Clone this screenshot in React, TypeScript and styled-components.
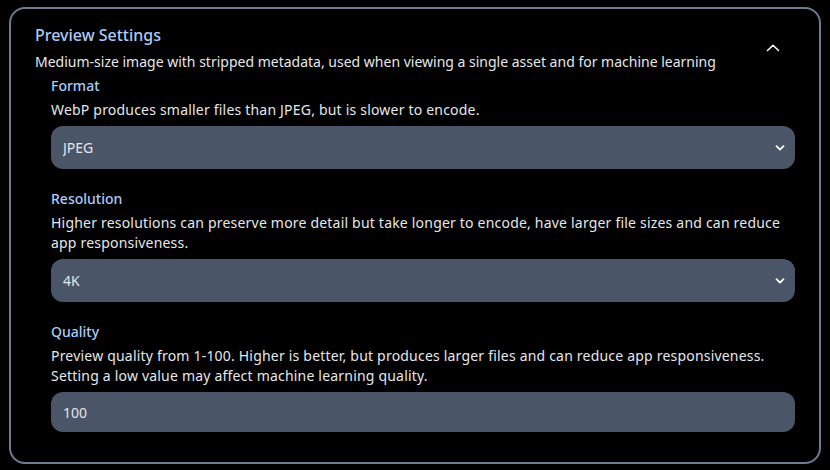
import React, { useState } from "react";
import styled, { createGlobalStyle } from "styled-components";

const Global = createGlobalStyle`
  body {
    margin: 0;
    background: #000;
    color: #e5e7eb;
    font-family: "Noto Sans", "Open Sans", sans-serif;
  }
`;

const Page = styled.div`
  padding: 7px 9px 4px;
`;

const Card = styled.section`
  border: 2px solid #6c7c97;
  border-radius: 16px;
  padding: 14px 24px 30px;
`;

const Header = styled.div`
  display: flex;
  align-items: center;
  justify-content: space-between;
`;

const Title = styled.h2`
  margin: 0;
  font-size: 16px;
  font-weight: 500;
  line-height: 24px;
  color: #adcbfa;
`;

const Subtitle = styled.p`
  margin: 5px 0 0;
  font-size: 14px;
  line-height: 20px;
`;

const Toggle = styled.button`
  width: 44px;
  height: 40px;
  display: flex;
  align-items: center;
  justify-content: center;
  background: none;
  border: none;
  color: #fff;
  cursor: pointer;
  padding: 0;
`;

const Settings = styled.div`
  display: flex;
  flex-direction: column;
  gap: 20px;
  padding-left: 16px;
  margin-top: 4px;
`;

const Setting = styled.div`
  display: flex;
  flex-direction: column;
`;

const Label = styled.label`
  font-size: 14px;
  font-weight: 500;
  line-height: 20px;
  color: #adcbfa;
`;

const Desc = styled.p`
  margin: 4px 0 0;
  font-size: 14px;
  line-height: 20px;
  letter-spacing: 0.2px;
`;

const Field = styled.div<{ $height: number }>`
  position: relative;
  margin-top: 6px;
  height: ${(p) => p.$height}px;
  border-radius: 12px;
  background: #4a5567;
  display: flex;
  align-items: center;
`;

const Select = styled.select`
  appearance: none;
  width: 100%;
  height: 100%;
  background: transparent;
  border: none;
  outline: none;
  color: #e5e7eb;
  font: inherit;
  font-size: 14px;
  padding: 0 40px 0 12px;
`;

const Input = styled.input`
  width: 100%;
  height: 100%;
  background: transparent;
  border: none;
  outline: none;
  color: #e5e7eb;
  font: inherit;
  font-size: 14px;
  padding: 0 12px;
  box-sizing: border-box;
`;

const Caret = styled.svg`
  position: absolute;
  right: 10px;
  top: 50%;
  transform: translateY(-50%);
  pointer-events: none;
`;

const ChevronDown = () => (
  <Caret width="10" height="10" viewBox="0 0 10 10">
    <path d="M1.5 3.2 L5 6.6 L8.5 3.2" fill="none" stroke="#fff" strokeWidth="1.8" strokeLinecap="round" strokeLinejoin="round" />
  </Caret>
);

const ChevronUp = () => (
  <svg width="16" height="10" viewBox="0 0 16 10">
    <path d="M2.5 7.5 L8 2.2 L13.5 7.5" fill="none" stroke="#fff" strokeWidth="1.5" strokeLinecap="round" strokeLinejoin="round" />
  </svg>
);

export default function App() {
  const [format, setFormat] = useState("jpeg");
  const [resolution, setResolution] = useState("2160");
  const [quality, setQuality] = useState("100");

  return (
    <Page>
      <Global />
      <Card>
        <Header>
          <div>
            <Title>Preview Settings</Title>
            <Subtitle>
              Medium-size image with stripped metadata, used when viewing a single asset and for machine learning
            </Subtitle>
          </div>
          <Toggle aria-label="Collapse">
            <ChevronUp />
          </Toggle>
        </Header>
        <Settings>
          <Setting>
            <Label>Format</Label>
            <Desc>WebP produces smaller files than JPEG, but is slower to encode.</Desc>
            <Field $height={43}>
              <Select value={format} onChange={(e) => setFormat(e.target.value)}>
                <option value="jpeg">JPEG</option>
                <option value="webp">WebP</option>
              </Select>
              <ChevronDown />
            </Field>
          </Setting>
          <Setting>
            <Label>Resolution</Label>
            <Desc>
              Higher resolutions can preserve more detail but take longer to encode, have larger file sizes and can
              reduce app responsiveness.
            </Desc>
            <Field $height={43}>
              <Select value={resolution} onChange={(e) => setResolution(e.target.value)}>
                <option value="2160">4K</option>
                <option value="1440">1440p</option>
                <option value="1080">1080p</option>
                <option value="720">720p</option>
              </Select>
              <ChevronDown />
            </Field>
          </Setting>
          <Setting>
            <Label>Quality</Label>
            <Desc>
              Preview quality from 1-100. Higher is better, but produces larger files and can reduce app
              responsiveness. Setting a low value may affect machine learning quality.
            </Desc>
            <Field $height={40}>
              <Input value={quality} onChange={(e) => setQuality(e.target.value)} />
            </Field>
          </Setting>
        </Settings>
      </Card>
    </Page>
  );
}
